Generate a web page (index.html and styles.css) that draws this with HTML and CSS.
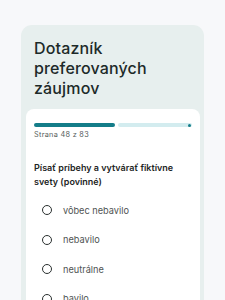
FILE: index.html
```html
<!DOCTYPE html>
<html lang="sk">
<head>
<meta charset="utf-8">
<link rel="stylesheet" href="styles.css">
</head>
<body>
<div class="page">
  <div class="card">
    <h1 class="title">Dotazník preferovaných záujmov</h1>
    <div class="panel">
      <div class="progress">
        <div class="fill" style="width:51.5%"></div>
        <div class="rest"><span class="dot"></span></div>
      </div>
      <div class="pageno">Strana 48 z 83</div>
      <div class="question">Písať príbehy a vytvárať fiktívne svety (povinné)</div>
      <div class="options">
        <label class="option"><span class="radio"></span><span class="label">vôbec nebavilo</span></label>
        <label class="option"><span class="radio"></span><span class="label">nebavilo</span></label>
        <label class="option"><span class="radio"></span><span class="label">neutrálne</span></label>
        <label class="option"><span class="radio"></span><span class="label">bavilo</span></label>
      </div>
    </div>
  </div>
</div>
</body>
</html>
```
FILE: styles.css
```css
html, body {
  margin: 0;
  padding: 0;
  background: #f7f8fa;
  font-family: "Inter", "DejaVu Sans", sans-serif;
}
.page {
  padding: 25px 21px 0 21px;
  height: 300px;
  box-sizing: border-box;
  overflow: hidden;
}
.card {
  background: #e7efee;
  border-radius: 11px 11px 0 0;
  padding: 13px 4px 0 5px;
  min-height: 300px;
}
.title {
  margin: 0;
  padding: 0 20px 0 8px;
  font-size: 16px;
  line-height: 20px;
  font-weight: 500;
  color: #1d2a29;
  letter-spacing: 0.15px;
}
.panel {
  margin-top: 11px;
  background: #ffffff;
  border-radius: 8px 8px 0 0;
  padding: 14px 8px 0 8px;
  min-height: 200px;
}
.progress {
  display: flex;
  gap: 3px;
  height: 4px;
}
.fill {
  background: #147d89;
  border-radius: 2px;
}
.rest {
  flex: 1;
  background: #d3ecef;
  border-radius: 2px;
  display: flex;
  justify-content: flex-end;
  align-items: center;
  padding-right: 1px;
}
.dot {
  width: 3px;
  height: 3px;
  border-radius: 50%;
  background: #147d89;
}
.pageno {
  margin-top: 2px;
  font-size: 7.3px;
  line-height: 12px;
  color: #555b5a;
  letter-spacing: 0.3px;
}
.question {
  margin-top: 20px;
  font-size: 9px;
  line-height: 14px;
  font-weight: 600;
  color: #1d2524;
}
.options {
  margin-top: 6.5px;
  display: flex;
  flex-direction: column;
}
.option {
  display: flex;
  align-items: center;
  height: 29.5px;
  padding-left: 8px;
}
.radio {
  width: 10px;
  height: 10px;
  box-sizing: border-box;
  border: 1.6px solid #2a302f;
  border-radius: 50%;
  flex: none;
}
.label {
  margin-left: 11px;
  font-size: 9.2px;
  color: #4f5453;
}
```
